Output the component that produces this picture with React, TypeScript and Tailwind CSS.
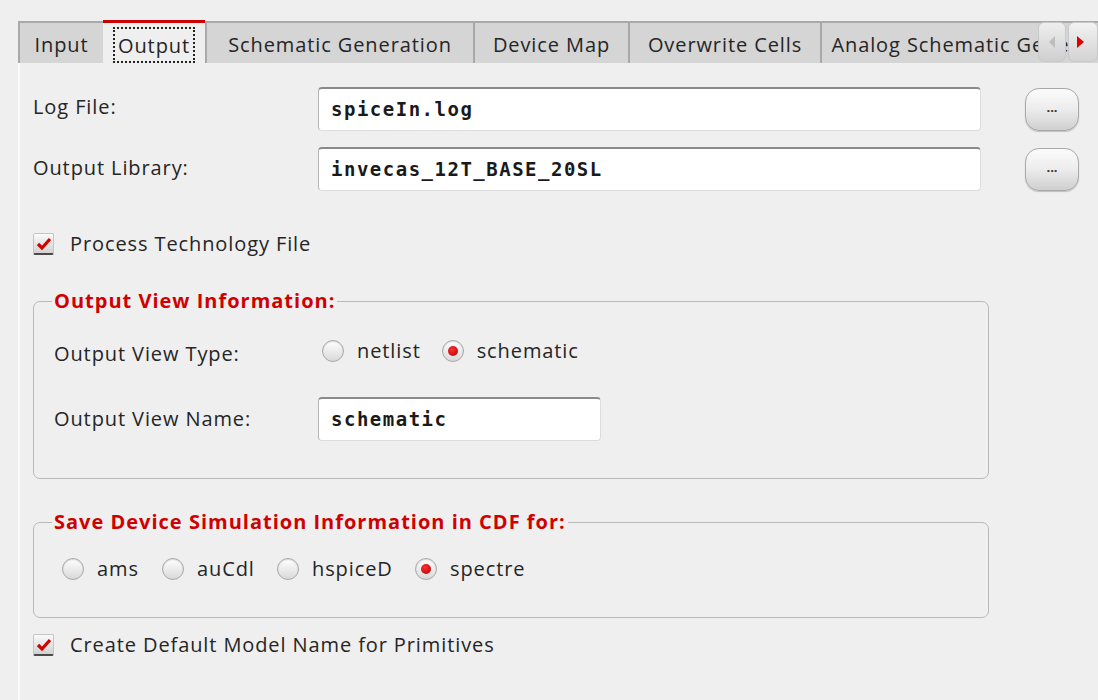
import React from "react";

const tabs = [
  { name: "Input", w: "w-[85px]" },
  { name: "Output", w: "w-[102px]", active: true },
  { name: "Schematic Generation", w: "w-[268px]" },
  { name: "Device Map", w: "w-[155px]" },
  { name: "Overwrite Cells", w: "w-[192px]" },
  { name: "Analog Schematic Generation", w: "w-[320px]" },
];

const simOptions = [
  { name: "ams", w: "w-[65px]" },
  { name: "auCdl", w: "w-[80px]" },
  { name: "hspiceD", w: "w-[103px]" },
  { name: "spectre", w: "w-[90px]", checked: true },
];

const Radio = ({ checked = false }: { checked?: boolean }) => (
  <span className="w-[22px] h-[22px] rounded-full border border-[#a9a9a9] bg-gradient-to-b from-[#ffffff] to-[#d9d9d9] shadow-[inset_0_1px_1px_rgba(0,0,0,0.15)] flex items-center justify-center shrink-0">
    {checked && <span className="w-[10px] h-[10px] rounded-full bg-[radial-gradient(circle_at_40%_35%,#ff3030,#b00000)]"></span>}
  </span>
);

const Checkbox = () => (
  <span className="w-[21px] h-[22px] rounded-[2px] border border-[#c4c4c4] border-b-2 border-b-[#4a4a4a] bg-gradient-to-b from-[#fafafa] to-[#d2d2d2] flex items-center justify-center shrink-0">
    <svg width="16" height="14" viewBox="0 0 16 14">
      <path d="M2 7 L6 11 L14 2" fill="none" stroke="#d40000" strokeWidth="3.2" strokeLinejoin="miter" />
    </svg>
  </span>
);

const TextField = ({ value, w }: { value: string; w: string }) => (
  <div className={`${w} h-[44px] bg-white rounded-[4px] border border-[#dcdcdc] border-t-2 border-t-[#8a8a8a] border-l-[#b5b5b5] flex items-center pl-[12px] font-['DejaVu_Sans_Mono',monospace] font-bold text-[19px] tracking-[1.5px] text-[#1a1a1a]`}>
    {value}
  </div>
);

const DotsButton = () => (
  <button className="w-[54px] h-[43px] rounded-[14px] border border-[#a8a8a8] bg-gradient-to-b from-[#fbfbfb] via-[#ececec] to-[#cfcfcf] shadow-[0_1px_1px_rgba(0,0,0,0.2)] flex items-center justify-center text-[#333] text-[13px] font-bold leading-none pb-[4px] tracking-normal">
    ...
  </button>
);

const Group = ({ title, children, h }: { title: string; children: React.ReactNode; h: string }) => (
  <fieldset className={`w-[956px] ${h} border border-[#b9b9b9] rounded-[7px] px-[20px]`}>
    <legend className="-ml-[2px] px-[2px] text-[20px] font-bold tracking-[1px] text-[#d00000] leading-[24px]">{title}</legend>
    {children}
  </fieldset>
);

export default function App() {
  return (
    <div className="w-[1098px] h-[700px] overflow-hidden bg-[#efefef] font-['Open_Sans',sans-serif] text-[#252525] text-[20px] tracking-[0.9px]">
      {/* tab bar */}
      <div className="relative h-[63px] pt-[20px] pl-[18px]">
        <div className="flex h-[43px] overflow-hidden">
          {tabs.map((t) =>
            t.active ? (
              <div key={t.name} className={`${t.w} shrink-0 h-full bg-[#efefef] border-t-[3px] border-t-[#cc0000] flex items-end justify-center`}>
                <span className="border-2 border-dotted border-[#222] px-[3px] h-[36px] flex items-center pt-[2px]">{t.name}</span>
              </div>
            ) : (
              <div key={t.name} className={`${t.w} shrink-0 h-full mt-[1px] pt-[3px] bg-[#d5d5d5] border-t-2 border-t-[#a9a9a9] border-l-2 border-l-[#a9a9a9] flex items-center justify-center whitespace-nowrap`}>
                {t.name}
              </div>
            )
          )}
        </div>
        <div className="absolute top-[22px] left-[1038px] flex gap-[2px]">
          <button className="w-[28px] h-[40px] rounded-[6px] border border-[#c8c8c8] bg-gradient-to-b from-[#eeeeee] to-[#cfcfcf] flex items-center justify-center">
            <svg width="10" height="14" viewBox="0 0 10 14"><path d="M8 1 L2 7 L8 13 Z" fill="#bdbdbd" /></svg>
          </button>
          <button className="w-[30px] h-[40px] rounded-[6px] border border-[#c8c8c8] bg-gradient-to-b from-[#f2f2f2] to-[#d3d3d3] flex items-center justify-start pl-[6px]">
            <svg width="10" height="14" viewBox="0 0 10 14"><path d="M2 1 L9 7 L2 13 Z" fill="#e00000" /></svg>
          </button>
        </div>
      </div>

      {/* pane */}
      <div className="ml-[18px] h-[637px] border-l-2 border-l-[#fbfbfb] pl-[13px] pt-[24px] flex flex-col">
        <div className="flex items-center h-[44px]">
          <span className="w-[285px] -mt-[4px]">Log File:</span>
          <TextField value="spiceIn.log" w="w-[663px]" />
          <div className="ml-[44px]"><DotsButton /></div>
        </div>
        <div className="flex items-center h-[44px] mt-[16px]">
          <span className="w-[285px] -mt-[2px]">Output Library:</span>
          <TextField value="invecas_12T_BASE_20SL" w="w-[663px]" />
          <div className="ml-[44px]"><DotsButton /></div>
        </div>

        <div className="flex items-center gap-[16px] mt-[38px]">
          <Checkbox />
          <span>Process Technology File</span>
        </div>

        <div className="mt-[30px]">
          <Group title="Output View Information:" h="h-[190px]">
            <div className="flex items-center mt-[23px] h-[30px]">
              <span className="w-[268px] mt-[6px]">Output View Type:</span>
              <div className="flex items-center">
                <Radio />
                <span className="ml-[13px]">netlist</span>
                <span className="ml-[21px]"><Radio checked /></span>
                <span className="ml-[13px]">schematic</span>
              </div>
            </div>
            <div className="flex items-center mt-[30px] h-[45px]">
              <span className="w-[264px]">Output View Name:</span>
              <TextField value="schematic" w="w-[283px]" />
            </div>
          </Group>
        </div>

        <div className="mt-[31px]">
          <Group title="Save Device Simulation Information in CDF for:" h="h-[108px]">
            <div className="flex items-center mt-[20px] ml-[8px] h-[30px]">
              {simOptions.map((o) => (
                <div key={o.name} className="flex items-center">
                  <Radio checked={o.checked} />
                  <span className={`ml-[13px] ${o.w}`}>{o.name}</span>
                </div>
              ))}
            </div>
          </Group>
        </div>

        <div className="flex items-center gap-[16px] mt-[12px]">
          <Checkbox />
          <span>Create Default Model Name for Primitives</span>
        </div>
      </div>
    </div>
  );
}
